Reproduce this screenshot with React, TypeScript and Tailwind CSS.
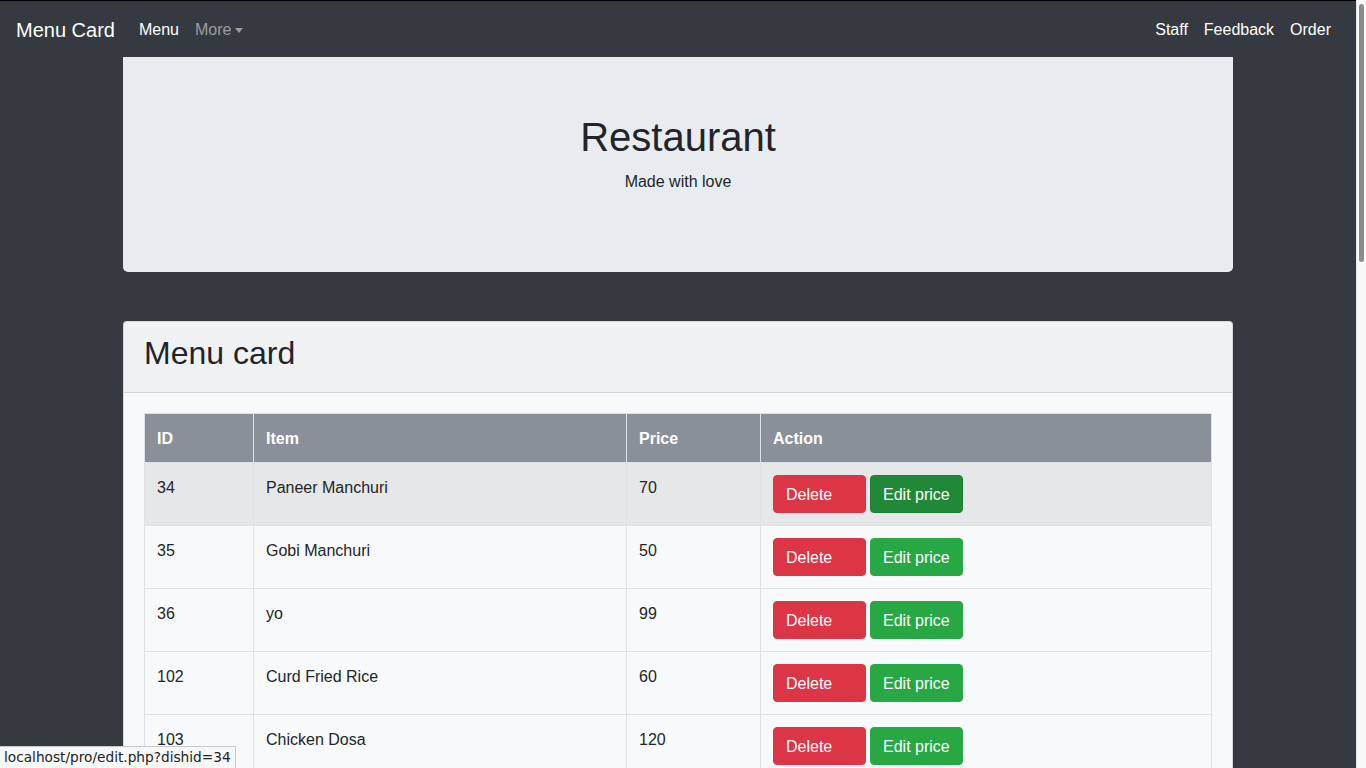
import type { FC } from "react";

interface Dish {
  id: number;
  name: string;
  price: number;
}

const dishes: Dish[] = [
  { id: 34, name: "Paneer Manchuri", price: 70 },
  { id: 35, name: "Gobi Manchuri", price: 50 },
  { id: 36, name: "yo", price: 99 },
  { id: 102, name: "Curd Fried Rice", price: 60 },
  { id: 103, name: "Chicken Dosa", price: 120 },
];

const Navbar: FC = () => (
  <nav className="h-[56px] flex items-center pl-4 pr-[17px] pt-px text-white">
    <a className="text-[20px] leading-[30px] py-[5px] mr-4">Menu Card</a>
    <ul className="flex">
      <li className="px-2 py-2 leading-6">Menu</li>
      <li className="px-2 py-2 leading-6 text-white/50 flex items-center">
        More
        <span className="ml-[4px] mt-[2px] inline-block w-0 h-0 border-x-[4.5px] border-x-transparent border-t-[5px] border-t-white/50" />
      </li>
    </ul>
    <ul className="flex ml-auto">
      <li className="px-2 py-2 leading-6">Staff</li>
      <li className="px-2 py-2 leading-6">Feedback</li>
      <li className="px-2 py-2 leading-6">Order</li>
    </ul>
  </nav>
);

const App: FC = () => {
  return (
    <div
      className="relative h-[768px] overflow-hidden flex text-[#212529]"
      style={{ fontFamily: '"Liberation Sans", Arial, sans-serif' }}
    >
      <div className="flex-1 border-t border-black bg-[#343a40]">
        <Navbar />
        <div className="w-[1140px] mx-auto px-[15px]">
          <div className="bg-[#e9ecef] rounded-b-[5px] pt-[56px] pb-[78px] text-center">
            <h1 className="text-[40px] leading-[48px] mb-[9px]">Restaurant</h1>
            <p className="text-base leading-6">Made with love</p>
          </div>

          <div className="mt-[49px] bg-[#f8f9fa] border border-black/[.125] rounded-[4px]">
            <div className="bg-black/[.03] border-b border-black/[.125] px-5 py-3">
              <h2 className="text-[32px] leading-[38.4px] mb-2">Menu card</h2>
            </div>
            <div className="py-5 pl-[20px] pr-[20px]">
              <table className="w-full border-collapse border border-[#dee2e6] text-base leading-6">
                <thead>
                  <tr className="bg-[#8a9097] text-white text-left">
                    <th className="w-[109px] border border-[#dee2e6] px-3 pt-[13px] pb-[11px] font-bold">ID</th>
                    <th className="w-[373px] border border-[#dee2e6] px-3 pt-[13px] pb-[11px] font-bold">Item</th>
                    <th className="w-[134px] border border-[#dee2e6] px-3 pt-[13px] pb-[11px] font-bold">Price</th>
                    <th className="border border-[#dee2e6] px-3 pt-[13px] pb-[11px] font-bold">Action</th>
                  </tr>
                </thead>
                <tbody>
                  {dishes.map((d, i) => (
                    <tr key={d.id} className={i === 0 ? "bg-[#e6e7e8]" : ""}>
                      <td className="border border-[#dee2e6] px-3 pt-[13px] pb-[11px] align-top">{d.id}</td>
                      <td className="border border-[#dee2e6] px-3 pt-[13px] pb-[11px] align-top">{d.name}</td>
                      <td className="border border-[#dee2e6] px-3 pt-[13px] pb-[11px] align-top">{d.price}</td>
                      <td className="border border-[#dee2e6] px-3 py-3 align-top">
                        <div className="flex gap-[4px]">
                          <button className="w-[93px] h-[38px] rounded-[4px] bg-[#dc3545] border border-[#dc3545] pl-3 pt-px text-left text-white text-base">
                            Delete
                          </button>
                          <button
                            className={
                              i === 0
                                ? "w-[93px] h-[38px] rounded-[4px] bg-[#218838] border border-[#1e7e34] pl-3 pt-px text-left text-white text-base"
                                : "w-[93px] h-[38px] rounded-[4px] bg-[#28a745] border border-[#28a745] pl-3 pt-px text-left text-white text-base"
                            }
                          >
                            Edit price
                          </button>
                        </div>
                      </td>
                    </tr>
                  ))}
                </tbody>
              </table>
            </div>
          </div>
        </div>
      </div>

      {/* fake scrollbar */}
      <div className="w-[10px] bg-[#f8f8f8] border-l border-[#e6e6e6] pt-[4px] flex justify-center">
        <div className="w-[5px] h-[258px] rounded-full bg-[#8c8c8c]" />
      </div>

      {/* link status bubble */}
      <div
        className="absolute left-0 bottom-0 h-[22px] px-[4px] bg-[#f7f7f7] border-t border-r border-[#c8c8c8] leading-[21px] text-[#222]"
        style={{ fontFamily: '"DejaVu Sans", sans-serif', fontSize: 13.7 }}
      >
        localhost/pro/edit.php?dishid=34
      </div>
    </div>
  );
};

export default App;
